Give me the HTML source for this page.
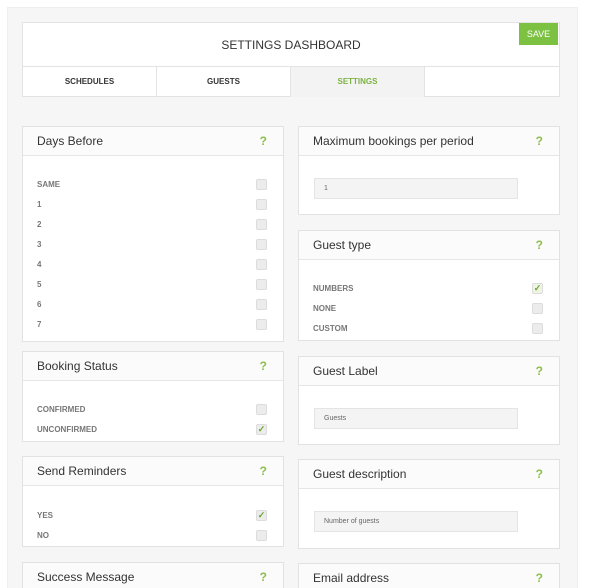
<!DOCTYPE html>
<html style="width:600px;height:588px;overflow:hidden"><head><meta charset="utf-8"><style>
*{margin:0;padding:0;box-sizing:border-box}
body{width:600px;height:588px;background:#fff;position:relative;overflow:hidden;font-family:"Liberation Sans",Arial,sans-serif}
.bg{position:absolute;left:7px;top:7px;width:571px;height:581px;background:#f6f6f6;border:1px solid #eee;border-bottom:none}
.top{position:absolute;left:22px;top:22px;width:538px;height:75px;background:#fff;border:1px solid #e3e3e3}
.title{position:absolute;left:0;top:0;width:536px;height:44px;line-height:44px;text-align:center;font-size:12px;color:#333;border-bottom:1px solid #e3e3e3}
.save{position:absolute;left:496px;top:0;width:39px;height:22px;background:#7cc142;color:#fff;font-size:9px;line-height:22px;text-align:center}
.tab{position:absolute;top:44px;height:30px;line-height:30px;text-align:center;font-size:8px;font-weight:bold;color:#333;border-right:1px solid #e3e3e3}
.p{position:absolute;background:#fff;border:1px solid #e2e2e2}
.h{position:absolute;left:0;top:0;right:0;height:29px;background:#fbfbfb;border-bottom:1px solid #e6e6e6;font-size:12px;color:#333;line-height:29px;padding-left:14px}
.q{position:absolute;right:16px;top:0;color:#8cc04a;font-weight:bold;font-size:12px}
.l{position:absolute;left:14px;font-size:8px;font-weight:bold;color:#777}
.c{position:absolute;left:233px;width:11px;height:11px;background:#ececec;border:1px solid #dcdcdc;border-radius:2px;font-size:9px;color:#6aa630;line-height:9px;text-align:center;font-weight:bold}
.i{position:absolute;left:15px;width:204px;height:21px;background:#f4f4f4;border:1px solid #e4e4e4;font-size:7px;color:#666;line-height:19px;padding-left:9px}
</style></head><body>
<div class="bg"></div>
<div class="top">
<div class="title">SETTINGS DASHBOARD</div>
<div class="save">SAVE</div>
<div class="tab" style="left:0;width:134px">SCHEDULES</div>
<div class="tab" style="left:134px;width:134px">GUESTS</div>
<div class="tab" style="left:268px;width:134px;background:#f3f3f3;color:#7cb342">SETTINGS</div>
</div>

<div class="p" style="left:22px;top:126px;width:262px;height:216px">
<div class="h">Days Before<span class="q">?</span></div>
<div class="l" style="top:53px">SAME</div><div class="c" style="top:52px"></div>
<div class="l" style="top:73px">1</div><div class="c" style="top:72px"></div>
<div class="l" style="top:93px">2</div><div class="c" style="top:92px"></div>
<div class="l" style="top:113px">3</div><div class="c" style="top:112px"></div>
<div class="l" style="top:133px">4</div><div class="c" style="top:132px"></div>
<div class="l" style="top:153px">5</div><div class="c" style="top:152px"></div>
<div class="l" style="top:173px">6</div><div class="c" style="top:172px"></div>
<div class="l" style="top:193px">7</div><div class="c" style="top:192px"></div>
</div>

<div class="p" style="left:22px;top:351px;width:262px;height:91px">
<div class="h">Booking Status<span class="q">?</span></div>
<div class="l" style="top:53px">CONFIRMED</div><div class="c" style="top:52px"></div>
<div class="l" style="top:73px">UNCONFIRMED</div><div class="c" style="top:72px">✓</div>
</div>

<div class="p" style="left:22px;top:456px;width:262px;height:91px">
<div class="h">Send Reminders<span class="q">?</span></div>
<div class="l" style="top:54px">YES</div><div class="c" style="top:53px">✓</div>
<div class="l" style="top:74px">NO</div><div class="c" style="top:73px"></div>
</div>

<div class="p" style="left:22px;top:562px;width:262px;height:26px;border-bottom:none">
<div class="h" style="border-bottom:none;height:26px">Success Message<span class="q">?</span></div>
</div>

<div class="p" style="left:298px;top:126px;width:262px;height:89px">
<div class="h">Maximum bookings per period<span class="q">?</span></div>
<div class="i" style="top:51px">1</div>
</div>

<div class="p" style="left:298px;top:230px;width:262px;height:111px">
<div class="h">Guest type<span class="q">?</span></div>
<div class="l" style="top:53px">NUMBERS</div><div class="c" style="top:52px;background:#eef3e4">✓</div>
<div class="l" style="top:73px">NONE</div><div class="c" style="top:72px"></div>
<div class="l" style="top:93px">CUSTOM</div><div class="c" style="top:92px"></div>
</div>

<div class="p" style="left:298px;top:356px;width:262px;height:89px">
<div class="h">Guest Label<span class="q">?</span></div>
<div class="i" style="top:51px">Guests</div>
</div>

<div class="p" style="left:298px;top:459px;width:262px;height:90px">
<div class="h">Guest description<span class="q">?</span></div>
<div class="i" style="top:51px">Number of guests</div>
</div>

<div class="p" style="left:298px;top:563px;width:262px;height:25px;border-bottom:none">
<div class="h" style="border-bottom:none;height:25px">Email address<span class="q">?</span></div>
</div>
</body></html>
